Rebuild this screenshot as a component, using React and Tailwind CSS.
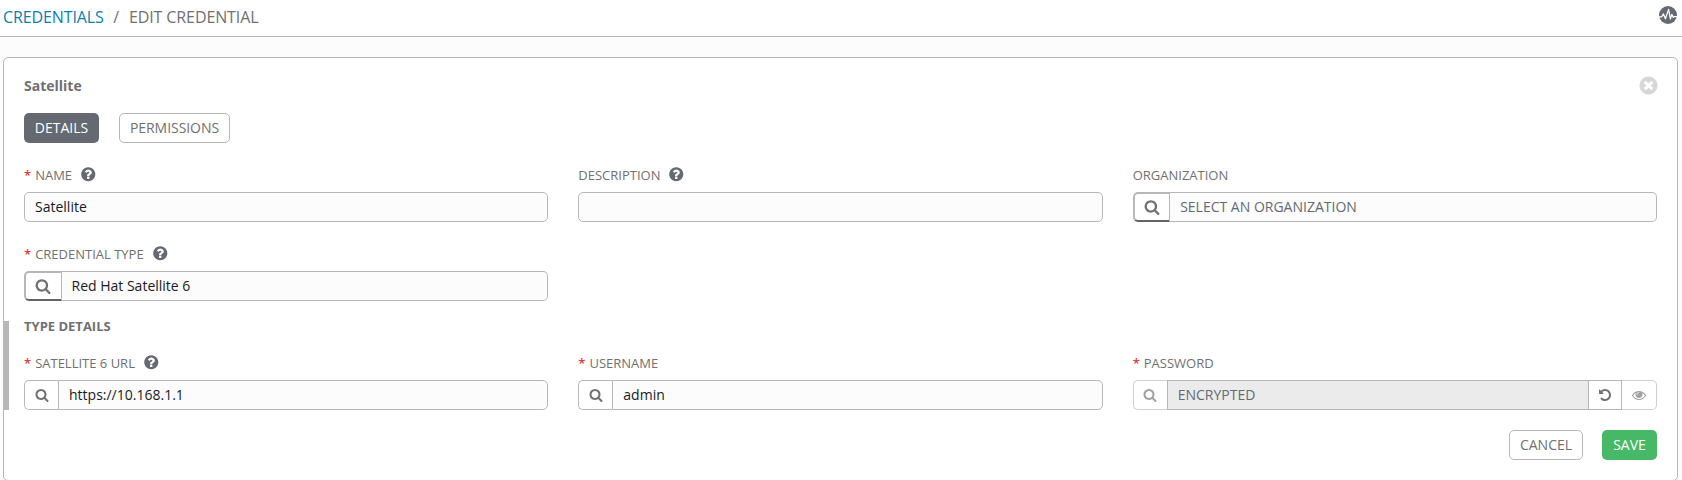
const CIRCLE =
  "M1664 896q0 209-103 385.5t-279.5 279.5-385.5 103-385.5-103-279.5-279.5-103-385.5 103-385.5 279.5-279.5 385.5-103 385.5 103 279.5 279.5 103 385.5z";

const PATHS = {
  search:
    "M1216 832q0-185-131.5-316.5t-316.5-131.5-316.5 131.5-131.5 316.5 131.5 316.5 316.5 131.5 316.5-131.5 131.5-316.5zm512 832q0 52-38 90t-90 38q-54 0-90-38l-343-342q-179 124-399 124-143 0-273.5-55.5t-225-150-150-225-55.5-273.5 55.5-273.5 150-225 225-150 273.5-55.5 273.5 55.5 225 150 150 225 55.5 273.5q0 220-124 399l343 343q37 37 37 90z",
  question:
    "M1024 1376v-192q0-14-9-23t-23-9h-192q-14 0-23 9t-9 23v192q0 14 9 23t23 9h192q14 0 23-9t9-23zm256-672q0-88-55.5-163t-138.5-116-170-41q-243 0-371 213-15 24 8 42l132 100q7 6 19 6 16 0 25-12 53-68 86-92 34-24 86-24 48 0 85.5 26t37.5 59q0 38-20 61t-68 45q-63 28-115.5 86.5t-52.5 125.5v36q0 14 9 23t23 9h192q14 0 23-9t9-23q0-19 21.5-49.5t54.5-49.5q32-18 49-28.5t46-35 44.5-48 28-60.5 12.5-81z" +
    CIRCLE,
  close:
    "M1277 1122q0-26-19-45l-181-181 181-181q19-19 19-45 0-27-19-46l-90-90q-19-19-46-19-26 0-45 19l-181 181-181-181q-19-19-45-19-27 0-46 19l-90 90q-19 19-19 46 0 26 19 45l181 181-181 181q-19 19-19 45 0 27 19 46l90 90q19 19 46 19 26 0 45-19l181-181 181 181q19 19 45 19 27 0 46-19l90-90q19-19 19-46z" +
    CIRCLE,
  undo: "M1664 896q0 156-61 298t-164 245-245 164-298 61q-172 0-327-72.5t-264-204.5q-7-10-6.5-22.5t8.5-20.5l137-138q10-9 25-9 16 2 23 12 73 95 179 147t225 52q104 0 198.5-40.5t163.5-109.5 109.5-163.5 40.5-198.5-40.5-198.5-109.5-163.5-163.5-109.5-198.5-40.5q-98 0-188 35.5t-160 101.5l137 138q31 30 14 69-17 40-59 40h-448q-26 0-45-19t-19-45v-448q0-42 40-59 39-17 69 14l130 129q107-101 244.5-156.5t284.5-55.5q156 0 298 61t245 164 164 245 61 298z",
  eye: "M1664 960q-152-236-381-353 61 104 61 225 0 185-131.5 316.5t-316.5 131.5-316.5-131.5-131.5-316.5q0-121 61-225-229 117-381 353 133 205 333.5 326.5t434.5 121.5 434.5-121.5 333.5-326.5zm-720-384q0-20-14-34t-34-14q-125 0-214.5 89.5t-89.5 214.5q0 20 14 34t34 14 34-14 14-34q0-86 61-147t147-61q20 0 34-14t14-34zm848 384q0 34-20 69-140 230-376.5 368.5t-499.5 138.5-499.5-139-376.5-368q-20-35-20-69t20-69q140-229 376.5-368t499.5-139 499.5 139 376.5 368q20 35 20 69z",
};

function Icon({ name, className }) {
  return (
    <svg viewBox="0 0 1792 1792" fill="currentColor" fillRule={name === "question" || name === "close" ? "evenodd" : "nonzero"} className={`shrink-0 ${className}`}>
      <path d={PATHS[name]} />
    </svg>
  );
}

function ActivityIcon() {
  return (
    <svg viewBox="0 0 18 18" className="mb-0.5 size-[18px]">
      <circle cx="9" cy="9" r="9" fill="#646972" />
      <path
        d="M0 10.8h2.8l1.6-3 2 5L9.6 3.4l1.8 9.6 1.4-4.6 1.5 3 .9-.8h2.8"
        fill="none"
        stroke="#fff"
        strokeWidth="1.25"
        strokeLinejoin="round"
      />
    </svg>
  );
}

function Field({ label, required, help, children }) {
  return (
    <div className="flex min-w-0 flex-col">
      <div className="flex h-5 items-center text-[13px] leading-5 text-[#707070]">
        {required && <span className="mr-1 font-semibold text-[#e5393f]">*</span>}
        <span className="uppercase">{label}</span>
        {help && <Icon name="question" className="mb-px ml-2 size-[16.5px] text-[#646972]" />}
      </div>
      <div className="mt-[7px] flex h-[30px]">{children}</div>
    </div>
  );
}

function TextBox({ value, className = "" }) {
  return (
    <div className={`flex min-w-0 flex-1 items-center border border-[#b7b7b7] bg-[#fcfcfc] px-2.5 text-sm text-[#161b1f] ${className}`}>
      {value}
    </div>
  );
}

function LookupButton() {
  return (
    <div className="flex w-[37.5px] items-center justify-center rounded-l-[5px] border-2 border-r border-[#b7b7b7] border-b-[#646464] bg-white text-[#707070]">
      <Icon name="search" className="size-4" />
    </div>
  );
}

function SearchButton({ disabled }) {
  return (
    <div className={`flex w-[34px] items-center justify-center rounded-l-[5px] border border-r-0 border-[#b7b7b7] bg-white text-[#707070] ${disabled ? "opacity-65" : ""}`}>
      <Icon name="search" className="size-3.5" />
    </div>
  );
}

export default function App() {
  return (
    <div className="flex h-[480px] flex-col overflow-hidden bg-[#fcfcfc] font-['Open_Sans',sans-serif] text-sm text-[#707070]">
      <header className="flex h-[37px] shrink-0 items-center justify-between border-b border-[#b7b7b7] bg-white pr-[5px] pb-1 pl-[3px] text-base">
        <div className="flex pt-0.5 tracking-[-0.11px]">
          <span className="text-[#0b7fae]">CREDENTIALS</span>
          <span className="mr-2.5 ml-[9.5px]">/</span>
          <span>EDIT CREDENTIAL</span>
        </div>
        <ActivityIcon />
      </header>

      <main className="relative mt-5 mr-1 ml-[3px] h-[424px] shrink-0 rounded-[5px] border border-[#b7b7b7] bg-white px-5">
        <div className="absolute top-[263px] left-0 h-[89px] w-[5px] bg-[#b7b7b7]" />

        <div className="mt-[18px] flex h-5 items-center justify-between">
          <h1 className="text-sm font-bold">Satellite</h1>
          <Icon name="close" className="-mr-[1.5px] mb-[1.5px] size-[21px] text-[#d7d7d7]" />
        </div>

        <div className="mt-[17px] flex gap-5">
          <div className="flex h-[30px] w-[75px] items-center justify-center rounded-[5px] bg-[#646972] text-white">DETAILS</div>
          <div className="flex h-[30px] w-[111px] items-center justify-center rounded-[5px] border border-[#b7b7b7] tracking-[-0.05px]">PERMISSIONS</div>
        </div>

        <div className="mt-[22px] grid grid-cols-3 gap-x-[30px] gap-y-[22px]">
          <Field label="Name" required help>
            <TextBox value="Satellite" className="rounded-[5px]" />
          </Field>
          <Field label="Description" help>
            <TextBox className="rounded-[5px]" />
          </Field>
          <Field label="Organization">
            <LookupButton />
            <TextBox value={<span className="text-[#646972]">SELECT AN ORGANIZATION</span>} className="rounded-r-[5px] border-l-0" />
          </Field>
          <Field label="Credential Type" required help>
            <LookupButton />
            <TextBox value="Red Hat Satellite 6" className="rounded-r-[5px] border-l-0" />
          </Field>
        </div>

        <h2 className="mt-[15px] text-[13px] leading-5 font-bold">TYPE DETAILS</h2>

        <div className="mt-[17px] grid grid-cols-3 gap-x-[30px]">
          <Field label="Satellite 6 URL" required help>
            <SearchButton />
            <TextBox value="https://10.168.1.1" className="rounded-r-[5px]" />
          </Field>
          <Field label="Username" required>
            <SearchButton />
            <TextBox value="admin" className="rounded-r-[5px]" />
          </Field>
          <Field label="Password" required>
            <SearchButton disabled />
            <div className="flex min-w-0 flex-1 items-center border border-[#b7b7b7] bg-[#ebebeb] px-2.5 text-[#646972]">ENCRYPTED</div>
            <div className="flex w-[33px] items-center justify-center border-y border-r border-[#b7b7b7] bg-white">
              <Icon name="undo" className="size-3.5" />
            </div>
            <div className="flex w-[35px] items-center justify-center rounded-r-[5px] border border-l-0 border-[#b7b7b7] bg-white opacity-65">
              <Icon name="eye" className="size-3.5" />
            </div>
          </Field>
        </div>

        <div className="mt-5 flex justify-end gap-[19px]">
          <div className="flex h-[30px] w-[74px] items-center justify-center rounded-[5px] border border-[#b7b7b7]">CANCEL</div>
          <div className="flex h-[30px] w-[55px] items-center justify-center rounded-[5px] bg-[#47b866] text-white">SAVE</div>
        </div>
      </main>
    </div>
  );
}
